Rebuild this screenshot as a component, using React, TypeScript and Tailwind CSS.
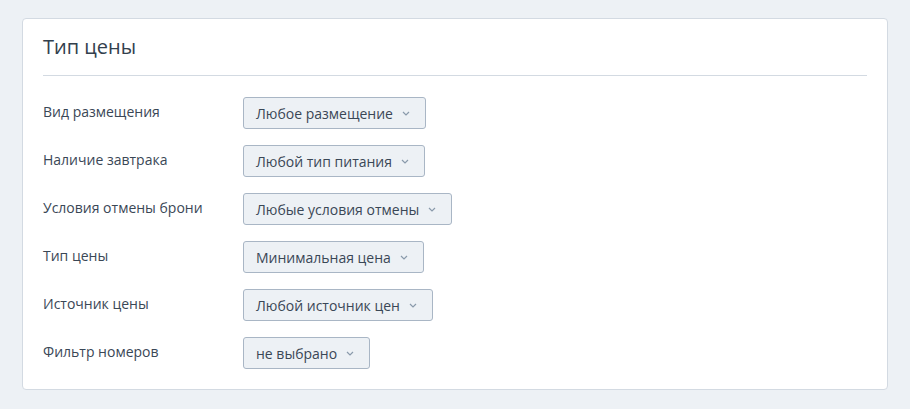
const rows = [
  { label: "Вид размещения", value: "Любое размещение" },
  { label: "Наличие завтрака", value: "Любой тип питания" },
  { label: "Условия отмены брони", value: "Любые условия отмены" },
  { label: "Тип цены", value: "Минимальная цена" },
  { label: "Источник цены", value: "Любой источник цен" },
  { label: "Фильтр номеров", value: "не выбрано" },
]

function Chevron() {
  return (
    <svg width="8" height="5" viewBox="0 0 8 5" fill="none" stroke="#8a9aab" strokeWidth="1.2" className="ml-[9px]">
      <path d="M1 1l3 3 3-3" />
    </svg>
  )
}

export default function App() {
  return (
    <div className="min-h-[409px] bg-[#edf1f5] px-[22px] pt-[18px] pb-[20px] font-['Open_Sans',sans-serif]">
      <div className="rounded-[4px] border border-[#d3dae2] bg-white px-[20px] pb-[20px]">
        <h2 className="pt-[14px] pb-[14px] text-[20px] leading-[28px] text-[#33404d]">Тип цены</h2>
        <div className="h-px bg-[#d3dae2]" />
        <div className="flex flex-col gap-[16px] pt-[21px]">
          {rows.map((r) => (
            <div key={r.label} className="flex items-center">
              <div className="w-[200px] pb-[4px] text-[14px] text-[#3a4756]">{r.label}</div>
              <button className="flex h-[32px] items-center rounded-[3px] border border-[#a9b6c5] bg-[#edf1f5] pl-[12px] pr-[15px] text-[14px] text-[#3a4756]">
                {r.value}
                <Chevron />
              </button>
            </div>
          ))}
        </div>
      </div>
    </div>
  )
}
